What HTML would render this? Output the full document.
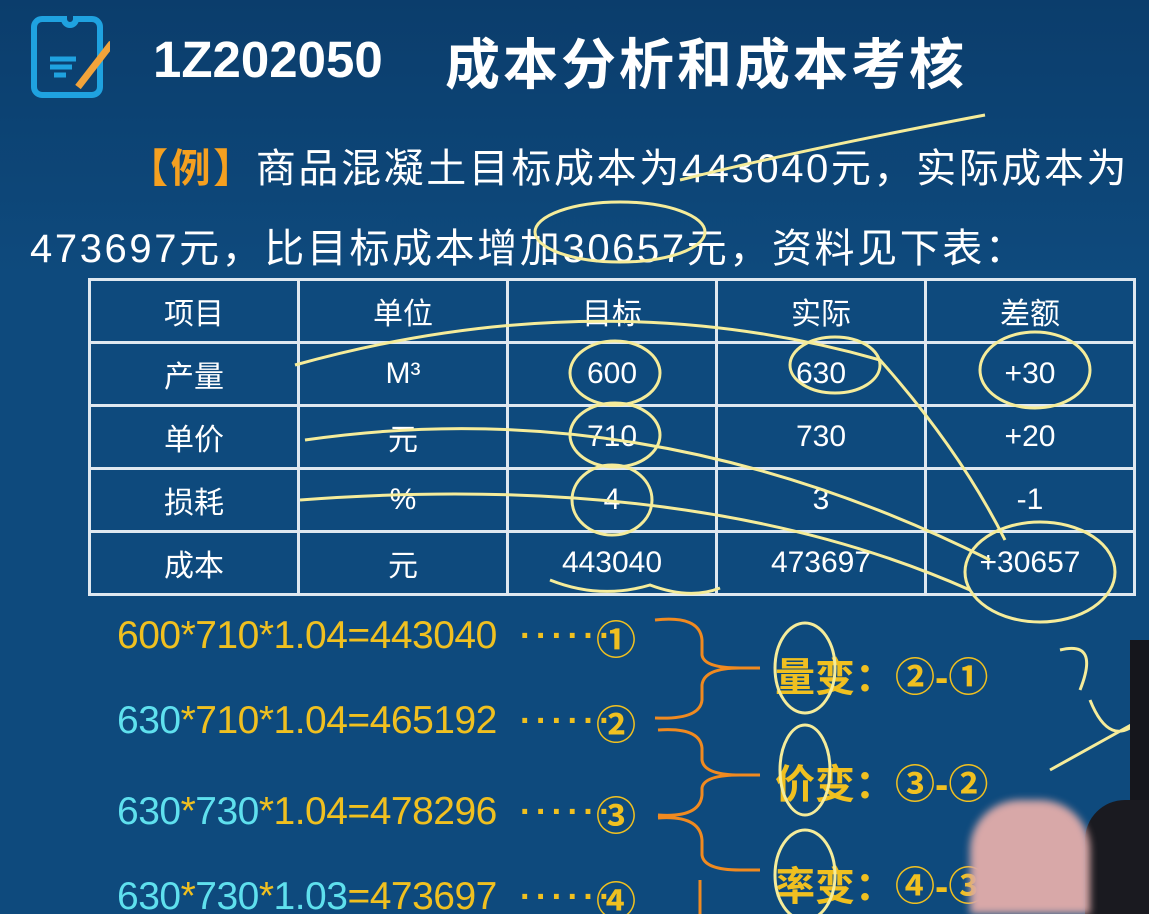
<!DOCTYPE html>
<html><head><meta charset="utf-8"><style>
*{margin:0;padding:0}
html,body{width:1149px;height:914px;overflow:hidden}
body{background:linear-gradient(#0b3d6c,#0e4a7d 30%,#0e4a7d);position:relative;font-family:"Liberation Sans","Noto Sans CJK SC",sans-serif}
.a{position:absolute;white-space:nowrap}
.t{color:#fff;font-weight:bold;font-size:51px}
.ex{color:#fff;font-size:40px;letter-spacing:2.6px}
table{position:absolute;left:88px;top:278px;border-collapse:collapse}
td{border:3px solid #dfe8f0;width:206px;height:60px;padding:0;text-align:center;color:#fff;font-size:30px}
.f{font-size:39px;color:#f0c020;letter-spacing:-0.5px}
.c{color:#5fe0ee}
.r{font-size:40px;color:#f0c020;font-weight:bold}
.d{font-size:34px;color:#f0c020;font-weight:bold;letter-spacing:4.5px}
.ci{font-size:40px;color:#f0c020;font-family:"Noto Sans CJK SC",sans-serif;font-weight:bold}
</style></head><body>
<svg class="a" style="left:30px;top:15px" width="80" height="86" viewBox="0 0 80 86">
<path d="M12 4 H34 a6 6 0 0 0 12 0 H62 a8 8 0 0 1 8 8 V72 a8 8 0 0 1 -8 8 H12 a8 8 0 0 1 -8 -8 V12 a8 8 0 0 1 8 -8z" fill="none" stroke="#1fa2e0" stroke-width="6"/>
<path d="M20 44 H46 M20 52 H42 M24 60 H36" stroke="#1fa2e0" stroke-width="5"/>
<path d="M82 28 L48 72" stroke="#f2a33a" stroke-width="7"/>
</svg>
<div class="a t" style="left:153px;top:30px">1Z202050</div>
<div class="a t" style="left:445px;top:20px;font-size:55px;letter-spacing:3px">成本分析和成本考核</div>
<div class="a ex" style="left:128px;top:136px"><span style="color:#f5a020;font-weight:bold">【例】</span>商品混凝土目标成本为443040元，实际成本为</div>
<div class="a ex" style="left:30px;top:216px">473697元，比目标成本增加30657元，资料见下表：</div>
<table>
<tr><td>项目</td><td>单位</td><td>目标</td><td>实际</td><td>差额</td></tr>
<tr><td>产量</td><td>M³</td><td>600</td><td>630</td><td>+30</td></tr>
<tr><td>单价</td><td>元</td><td>710</td><td>730</td><td>+20</td></tr>
<tr><td>损耗</td><td>%</td><td>4</td><td>3</td><td>-1</td></tr>
<tr><td>成本</td><td>元</td><td>443040</td><td>473697</td><td>+30657</td></tr>
</table>
<div class="a f" style="left:117px;top:614px">600*710*1.04=443040</div>
<div class="a f" style="left:117px;top:699px"><span class="c">630</span>*710*1.04=465192</div>
<div class="a f" style="left:117px;top:790px"><span class="c">630</span>*<span class="c">730</span>*1.04=478296</div>
<div class="a f" style="left:117px;top:875px"><span class="c">630</span>*<span class="c">730</span>*<span class="c">1.03</span>=473697</div>
<div class="a d" style="left:520px;top:617px">······</div>
<div class="a d" style="left:520px;top:702px">······</div>
<div class="a d" style="left:520px;top:793px">······</div>
<div class="a d" style="left:520px;top:878px">······</div>
<div class="a ci" style="left:596px;top:608px">①</div>
<div class="a ci" style="left:596px;top:693px">②</div>
<div class="a ci" style="left:596px;top:784px">③</div>
<div class="a ci" style="left:596px;top:869px">④</div>
<div class="a r" style="left:775px;top:645px">量变：②-①</div>
<div class="a r" style="left:775px;top:752px">价变：③-②</div>
<div class="a r" style="left:775px;top:854px">率变：④-③</div>
<svg class="a" style="left:0;top:0" width="1149" height="914">
<g fill="none" stroke="#f08a20" stroke-width="3">
<path d="M655 620 Q700 615 702 640 V655 Q704 668 740 668 H760 M655 718 Q700 720 702 700 V685 Q704 668 740 668"/>
<path d="M658 730 Q700 727 702 748 V760 Q704 775 740 775 H760 M658 815 Q700 818 702 795 V788 Q704 775 740 775"/>
<path d="M658 818 Q700 815 702 840 V855 Q704 870 740 870 H760 M700 880 V914"/>
</g>
<g fill="none" stroke="#f5ec9a" stroke-width="3">
<ellipse cx="615" cy="373" rx="45" ry="32"/><ellipse cx="615" cy="435" rx="45" ry="32"/><ellipse cx="612" cy="500" rx="40" ry="35"/>
<ellipse cx="835" cy="365" rx="45" ry="28"/><ellipse cx="1035" cy="370" rx="55" ry="38"/>
<ellipse cx="1040" cy="572" rx="75" ry="50"/><ellipse cx="620" cy="232" rx="85" ry="30"/>
<ellipse cx="805" cy="668" rx="30" ry="45"/><ellipse cx="805" cy="770" rx="25" ry="45"/><ellipse cx="805" cy="875" rx="30" ry="45"/>
<path d="M295 365 Q600 280 880 360 Q960 450 1005 540"/>
<path d="M305 440 Q650 390 990 560"/><path d="M300 500 Q700 470 970 590"/>
<path d="M680 180 Q800 150 985 115"/>
<path d="M550 580 Q600 600 650 585 Q690 600 720 588"/>
<path d="M1060 650 Q1100 640 1080 690 M1050 770 L1140 720 M1090 700 Q1110 750 1140 720"/>
</g>
</svg>
<div class="a" style="left:1130px;top:640px;width:19px;height:274px;background:#15161c"></div>
<div class="a" style="left:1085px;top:800px;width:64px;height:114px;background:#1a1a20;border-radius:40px 0 0 0"></div>
<div class="a" style="left:970px;top:800px;width:120px;height:114px;background:#d8a8a8;border-radius:50px 50px 0 0;filter:blur(4px)"></div>
</body></html>
